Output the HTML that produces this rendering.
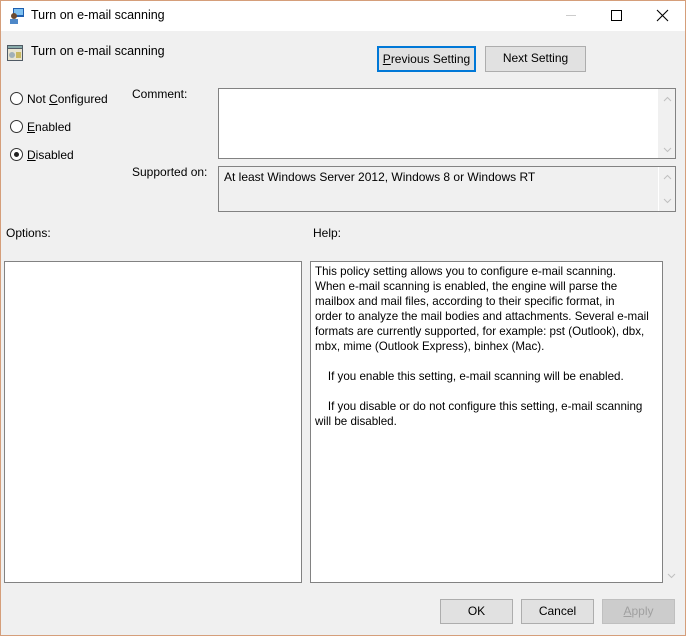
<!DOCTYPE html>
<html><head><style>
*{box-sizing:border-box;margin:0;padding:0}
body{width:686px;height:636px;overflow:hidden;background:#f0f0f0;font-family:"Liberation Sans",sans-serif;font-size:12px;color:#000;position:relative}
.frame{position:absolute;left:0;top:0;width:686px;height:636px;border:1px solid #d59e7a}
.title{position:absolute;left:1px;top:1px;width:684px;height:30px;background:#fff}
.a{position:absolute;white-space:nowrap}
.box{position:absolute;border:1px solid #828282;background:#fff}
.btn{position:absolute;border:1px solid #adadad;background:#e1e1e1;text-align:center;line-height:23px}
.radio{position:absolute;width:13px;height:13px;border:1px solid #333;border-radius:50%;background:#fff}
.up,.dn{position:absolute;width:9px;height:6px}
</style></head><body>
<div class="frame"></div>
<div class="title"></div>
<svg class="a" style="left:8px;top:7px" width="18" height="18"><rect x="5" y="1" width="11" height="9" fill="#1e5fb0"/><rect x="6" y="2" width="9" height="6" fill="#7ec0f0"/><circle cx="6" cy="9" r="3" fill="#6b4a30"/><rect x="2" y="12" width="8" height="5" fill="#4e88c8"/></svg>
<div class="a" style="left:31px;top:8px;font-size:12.5px">Turn on e-mail scanning</div>
<div class="a" style="left:566px;top:15px;width:10px;height:1px;background:#ccc"></div>
<div class="a" style="left:611px;top:10px;width:11px;height:11px;border:1px solid #000"></div>
<svg class="a" style="left:656px;top:9px" width="13" height="13"><path d="M1 1L12 12M12 1L1 12" stroke="#000" stroke-width="1.1"/></svg>
<svg class="a" style="left:7px;top:45px" width="16" height="16"><rect x="0" y="0" width="16" height="16" fill="#505a64"/><rect x="1" y="4" width="14" height="11" fill="#e8e4d0"/><rect x="1" y="1" width="14" height="2" fill="#8aa"/><circle cx="5" cy="10" r="3" fill="#a0b0b8"/><rect x="9" y="7" width="5" height="6" fill="#c9b860"/></svg>
<div class="a" style="left:31px;top:44px;font-size:12.5px">Turn on e-mail scanning</div>
<div class="btn" style="left:377px;top:46px;width:99px;height:26px;border:2px solid #0078d7;line-height:22px"><u>P</u>revious Setting</div>
<div class="btn" style="left:485px;top:46px;width:101px;height:26px">Next Setting</div>
<div class="radio" style="left:10px;top:92px"></div><div class="a" style="left:27px;top:92px"><span>Not <u>C</u>onfigured</span></div>
<div class="radio" style="left:10px;top:120px"></div><div class="a" style="left:27px;top:120px"><u>E</u>nabled</div>
<div class="radio" style="left:10px;top:148px"><div style="position:absolute;left:3px;top:3px;width:5px;height:5px;border-radius:50%;background:#222"></div></div><div class="a" style="left:27px;top:148px"><u>D</u>isabled</div>
<div class="a" style="left:132px;top:87px">Comment:</div>
<div class="box" style="left:218px;top:88px;width:458px;height:71px"><div style="position:absolute;right:0;top:0;width:17px;height:69px;background:#f0f0f0"></div></div>
<svg class="up" style="left:663px;top:96px" viewBox="0 0 9 6"><path d="M1 5L4.5 1.5L8 5" stroke="#c0c0c0" fill="none"/></svg>
<svg class="dn" style="left:663px;top:147px" viewBox="0 0 9 6"><path d="M1 1L4.5 4.5L8 1" stroke="#c0c0c0" fill="none"/></svg>
<div class="a" style="left:132px;top:165px">Supported on:</div>
<div class="box" style="left:218px;top:166px;width:458px;height:46px;background:#f0f0f0"><div style="position:absolute;right:0;top:0;width:17px;height:44px;border-left:1px solid #fff"></div></div>
<div class="a" style="left:224px;top:170px">At least Windows Server 2012, Windows 8 or Windows RT</div>
<svg class="up" style="left:663px;top:174px" viewBox="0 0 9 6"><path d="M1 5L4.5 1.5L8 5" stroke="#c0c0c0" fill="none"/></svg>
<svg class="dn" style="left:663px;top:198px" viewBox="0 0 9 6"><path d="M1 1L4.5 4.5L8 1" stroke="#c0c0c0" fill="none"/></svg>
<div class="a" style="left:6px;top:226px">Options:</div>
<div class="a" style="left:313px;top:226px">Help:</div>
<div class="box" style="left:4px;top:261px;width:298px;height:322px"></div>
<div class="box" style="left:310px;top:261px;width:353px;height:322px"></div>
<svg class="dn" style="left:667px;top:573px" viewBox="0 0 9 6"><path d="M1 1L4.5 4.5L8 1" stroke="#c0c0c0" fill="none"/></svg>
<div class="a" style="left:315px;top:264px;line-height:15px;font-size:11.6px">This policy setting allows you to configure e-mail scanning.<br>When e-mail scanning is enabled, the engine will parse the<br>mailbox and mail files, according to their specific format, in<br>order to analyze the mail bodies and attachments. Several e-mail<br>formats are currently supported, for example: pst (Outlook), dbx,<br>mbx, mime (Outlook Express), binhex (Mac).<br><br>&nbsp;&nbsp;&nbsp;&nbsp;If you enable this setting, e-mail scanning will be enabled.<br><br>&nbsp;&nbsp;&nbsp;&nbsp;If you disable or do not configure this setting, e-mail scanning<br>will be disabled.</div>
<div class="btn" style="left:440px;top:599px;width:73px;height:25px">OK</div>
<div class="btn" style="left:521px;top:599px;width:73px;height:25px">Cancel</div>
<div class="btn" style="left:602px;top:599px;width:73px;height:25px;background:#ccc;border-color:#bfbfbf;color:#a0a0a0"><u>A</u>pply</div>
</body></html>
